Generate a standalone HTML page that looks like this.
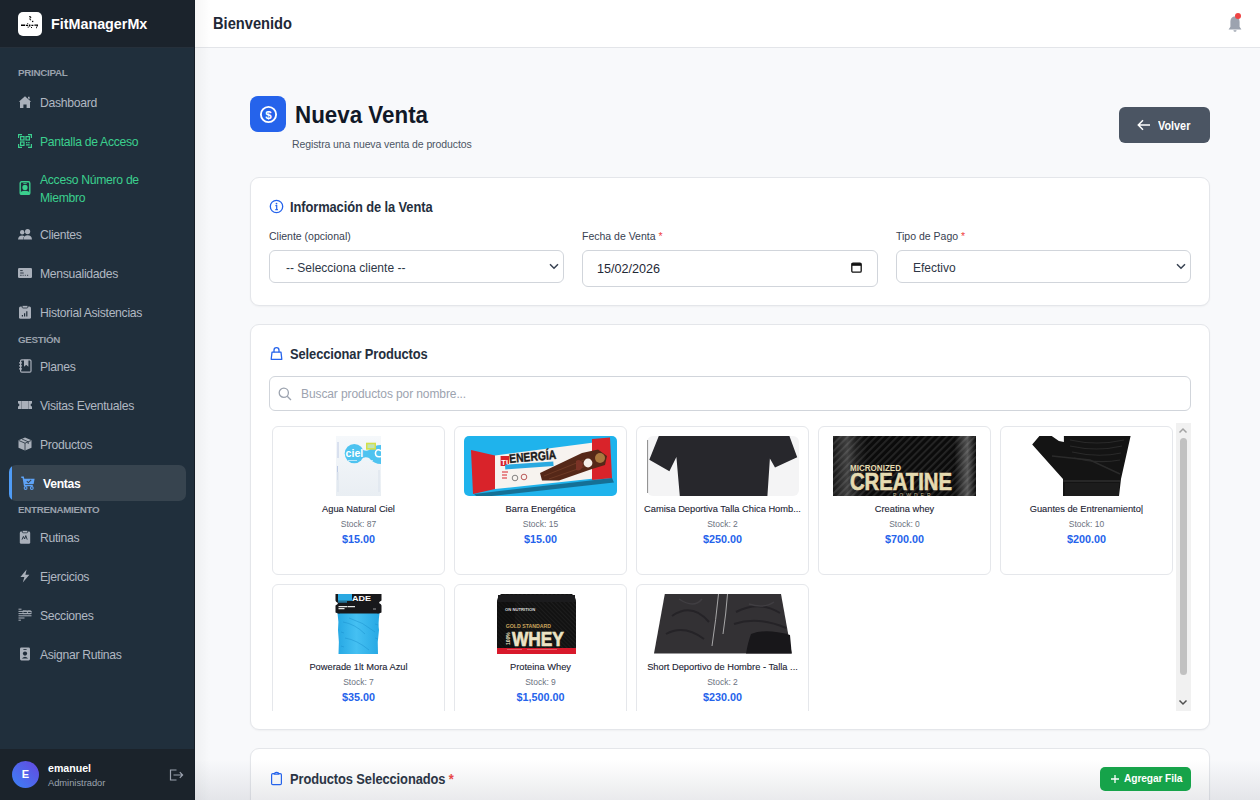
<!DOCTYPE html>
<html><head><meta charset="utf-8">
<style>
*{box-sizing:border-box;margin:0;padding:0}
html,body{width:1260px;height:800px;overflow:hidden;background:#f8f9fb;font-family:"Liberation Sans",sans-serif;position:relative}
.a{position:absolute;white-space:nowrap}
/* sidebar */
#sb{position:absolute;left:0;top:0;width:195px;height:800px;background:#202f3c;border-right:1px solid #161e27}
#brand{position:absolute;left:0;top:0;width:194px;height:48px;background:#1b232c;border-bottom:1px solid #26303b}
#logo{position:absolute;left:18px;top:12px;width:24px;height:24px;background:#fff;border-radius:5px}
.sec{position:absolute;left:18px;font-size:9.8px;font-weight:700;color:#9aa2ad;letter-spacing:-0.3px;line-height:12px}
.it{position:absolute;left:40px;font-size:12.2px;color:#b1b8c2;line-height:18px;letter-spacing:-0.3px}
.it.g{color:#3bcf8e}
.ic{position:absolute;left:18px;width:14px;height:14px}
#act{position:absolute;left:9px;top:465px;width:177px;height:36px;background:#37444f;border-radius:7px;overflow:hidden}
#act:before{content:"";position:absolute;left:0;top:0;width:3px;height:36px;background:#4f9cf6}
#foot{position:absolute;left:0;top:749px;width:194px;height:51px;background:#1b232b}
/* main */
#hdr{position:absolute;left:195px;top:0;width:1065px;height:48px;background:#fff;border-bottom:1px solid #e3e5e9}
#shadowL{position:absolute;left:195px;top:0;width:16px;height:800px;background:linear-gradient(90deg,rgba(0,0,0,0.035),rgba(0,0,0,0))}
.card{position:absolute;left:250px;width:960px;background:#fff;border:1px solid #e4e6ea;border-radius:9px;box-shadow:0 1px 2px rgba(0,0,0,0.04)}
.ttl{position:absolute;font-size:14px;font-weight:700;color:#252f3e;line-height:16px;letter-spacing:-0.1px;transform:scaleX(0.92);transform-origin:0 0}
.lbl{position:absolute;font-size:10.5px;color:#374151;line-height:13px}
.req{color:#ef4444}
.inp{position:absolute;background:#fff;border:1px solid #d1d5db;border-radius:6px}
.inp span{position:absolute;font-size:12px;color:#1f2937;line-height:14px}
.pc{position:absolute;width:173px;height:149px;background:#fff;border:1px solid #e5e7eb;border-radius:6px}
.pc .im{position:absolute;top:9px;height:60px}
.pc .nm{position:absolute;left:4px;width:163px;top:77px;text-align:center;font-size:9.3px;color:#1a2232;-webkit-text-stroke:0.1px #1a2232;line-height:11px;overflow:hidden;text-overflow:ellipsis;white-space:nowrap}
.pc .st{position:absolute;left:0;width:171px;top:92px;text-align:center;font-size:8.5px;color:#6b7280;line-height:10px}
.pc .pr{position:absolute;left:0;width:171px;top:105.5px;text-align:center;font-size:10.8px;font-weight:700;color:#2563eb;line-height:13px}
</style></head><body>

<div id="sb">
  <div id="brand">
    <div id="logo"><svg style="position:absolute;left:0;top:0" width="24" height="24" viewBox="0 0 24 24" fill="#000"><path d="M11 4.2h1.6l.9 1-1.5 1.6 1.3 1.2-.6.5-1.6-1.5 1.3-1.3-.5-.5H11z"/><rect x="14" y="8.8" width="1.3" height="1.3"/><rect x="9.2" y="11.2" width="1" height="1"/><path d="M3 12.6h4.2v1.5H3zM8 12.8h2.2v1.1H8zM11 12.5h1.4v2H11zM13.4 12.8h2v1.1h-2zM16.4 12.4h3.6v1.3l-1 1.2-.6-.4.5-.8h-2.5z"/><rect x="9.6" y="14.6" width="1.2" height="1"/><rect x="13" y="15" width="1" height="1"/><rect x="18" y="15.2" width="1" height="1"/></svg></div>
    <div class="a" style="left:51px;top:14.5px;font-size:15px;transform:scaleX(0.955);transform-origin:0 0;font-weight:700;color:#fff;line-height:17px">FitManagerMx</div>
  </div>
  <div class="sec" style="top:67px">PRINCIPAL</div>
  <div class="it" style="top:94px">Dashboard</div>
  <div class="it g" style="top:133px">Pantalla de Acceso</div>
  <div class="it g" style="top:171px">Acceso Número de<br>Miembro</div>
  <div class="it" style="top:226px">Clientes</div>
  <div class="it" style="top:265px">Mensualidades</div>
  <div class="it" style="top:304px">Historial Asistencias</div>
  <div class="sec" style="top:334px">GESTIÓN</div>
  <div class="it" style="top:358px">Planes</div>
  <div class="it" style="top:397px">Visitas Eventuales</div>
  <div class="it" style="top:436px">Productos</div>
  <div id="act"></div>
  <div class="it" style="top:475px;left:43px;font-weight:700;color:#fff">Ventas</div>
  <div class="sec" style="top:504px">ENTRENAMIENTO</div>
  <div class="it" style="top:529px">Rutinas</div>
  <div class="it" style="top:568px">Ejercicios</div>
  <div class="it" style="top:607px">Secciones</div>
  <div class="it" style="top:646px">Asignar Rutinas</div>
  <svg class="ic" style="top:95px" viewBox="0 0 14 14"><path fill="#a9b0ba" d="M7 1.2 L13.2 6.8 L12 6.8 V13 H8.6 V9.4 H5.4 V13 H2 V6.8 H0.8 Z M10 1.8 H11.6 V4.6 L10 3.2Z"/></svg>
  <svg class="ic" style="top:134px" viewBox="0 0 14 14" fill="none" stroke="#3bcf8e" stroke-width="1.2"><path d="M0.6 4V0.6H4M10 0.6h3.4V4M13.4 10v3.4H10M4 13.4H0.6V10"/><rect x="2.6" y="2.6" width="3.4" height="3.4"/><rect x="8" y="2.6" width="3.4" height="3.4"/><rect x="2.6" y="8" width="3.4" height="3.4"/><path d="M8 8.6h1.4M10.2 8.6h1.4M8 10.8h3.6"/></svg>
  <svg class="ic" style="top:181px;left:18px" viewBox="0 0 14 14"><rect x="2.2" y="0.8" width="9.6" height="12.6" rx="1.4" fill="none" stroke="#3bcf8e" stroke-width="1.4"/><circle cx="7" cy="6.4" r="2.6" fill="#3bcf8e"/><path d="M2.5 13.2 V11 Q7 8.6 11.5 11 V13.2Z" fill="#3bcf8e"/><rect x="5.3" y="2.2" width="3.4" height="0.8" fill="#3bcf8e"/></svg>
  <svg class="ic" style="top:227px" viewBox="0 0 14 14" fill="#a9b0ba"><circle cx="4.2" cy="5.2" r="2.2"/><circle cx="9.6" cy="4.6" r="2.6"/><path d="M0 12.4 Q0.4 8.6 4.2 8.6 Q5.6 8.6 6.4 9.2 Q5 10.6 5 12.4Z"/><path d="M5.4 12.4 Q5.8 8.2 9.6 8.2 Q13.6 8.2 14 12.4Z"/></svg>
  <svg class="ic" style="top:266px" viewBox="0 0 14 14"><rect x="0" y="2" width="14" height="10" rx="1.3" fill="#a9b0ba"/><path d="M2.2 4.6h2.5M2.2 7h3.5M2.2 9.3h1.4M4.6 9.3h1M6.8 9.3h1M9 9.3h1.2" stroke="#212e3b" stroke-width="0.9"/></svg>
  <svg class="ic" style="top:305px" viewBox="0 0 14 14"><rect x="1" y="1.6" width="12" height="12.2" rx="1.6" fill="#a9b0ba"/><rect x="4.2" y="0.4" width="5.6" height="2.6" rx="0.8" fill="#a9b0ba" stroke="#212e3b" stroke-width="0.8"/><path d="M4.4 11.6V10M6.6 11.6V8.2M8.8 11.6V6.2" stroke="#212e3b" stroke-width="1.2"/></svg>
  <svg class="ic" style="top:359px" viewBox="0 0 14 14" fill="none" stroke="#a9b0ba" stroke-width="1.2"><rect x="2.6" y="0.8" width="10.4" height="12.4" rx="1.2"/><path d="M6.6 0.8v5.6l1.6-1.3 1.6 1.3V0.8" fill="#a9b0ba"/><path d="M1 3.8h3M1 6.8h3M1 9.8h3"/></svg>
  <svg class="ic" style="top:398px" viewBox="0 0 14 14"><path fill="#a9b0ba" d="M0 3 H14 V5.6 A1.4 1.4 0 0 0 14 8.4 V11 H0 V8.4 A1.4 1.4 0 0 0 0 5.6Z"/><path d="M3.5 3.5v7M10.5 3.5v7" stroke="#212e3b" stroke-width="0.6" stroke-dasharray="1 1"/></svg>
  <svg class="ic" style="top:437px" viewBox="0 0 14 14"><path fill="#a9b0ba" d="M7 0.5 L13.5 3.3 V10.7 L7 13.5 L0.5 10.7 V3.3Z"/><path d="M0.8 3.5 L7 6.2 L13.2 3.5 M7 6.2 V13.3 M4 2 L10.2 4.8 V7" fill="none" stroke="#212e3b" stroke-width="0.8"/></svg>
  <svg class="ic" style="top:476px;left:21px" viewBox="0 0 14 14"><path fill="none" stroke="#5ea3f7" stroke-width="1.5" d="M0.3 1.2 H2.2 L3.6 9.4 H11.8"/><path fill="#5ea3f7" d="M2.6 2.8 H13.6 L12.6 8 H3.5Z"/><path fill="none" stroke="#374350" stroke-width="1.1" d="M5.8 5.2 L7.4 6.6 L10.2 3.9"/><circle cx="4.6" cy="12" r="1.4" fill="none" stroke="#5ea3f7" stroke-width="1.1"/><circle cx="10.8" cy="12" r="1.4" fill="none" stroke="#5ea3f7" stroke-width="1.1"/></svg>
  <svg class="ic" style="top:530px" viewBox="0 0 14 14"><rect x="1.8" y="1.6" width="10.4" height="12.2" rx="1.4" fill="#a9b0ba"/><rect x="4.4" y="0.4" width="5.2" height="2.4" rx="0.7" fill="#a9b0ba" stroke="#212e3b" stroke-width="0.7"/><path d="M4 9.6 L5.4 6.4 L6.6 9 L7.8 5.6 L9.2 9.6" fill="none" stroke="#212e3b" stroke-width="0.9"/></svg>
  <svg class="ic" style="top:569px" viewBox="0 0 14 14"><path fill="#a9b0ba" d="M8.6 0.4 L2.4 8 H6.4 L4.8 13.6 L11.4 5.8 H7.4Z"/></svg>
  <svg class="ic" style="top:608px" viewBox="0 0 14 14" fill="none" stroke="#a9b0ba" stroke-width="1"><path d="M0.5 1.2h3M0.5 3.4h13M0.5 5.6h13M0.5 7.8h13M0.5 10h6M0.5 12.2h2.4"/><path d="M5 2.6h3.4q1 0 1 1.6t-1 1.6H5z M9.6 2.6h2.6q1 0 1 1.6t-1 1.6H9.6z" stroke-width="0.7"/></svg>
  <svg class="ic" style="top:647px" viewBox="0 0 14 14"><rect x="2" y="0.5" width="10" height="13" rx="1.4" fill="#a9b0ba"/><circle cx="7" cy="6.6" r="2.1" fill="#212e3b"/><path d="M3.9 11.6 q3.1-3.8 6.2 0z" fill="#212e3b"/><rect x="5.4" y="2" width="3.2" height="0.8" fill="#212e3b"/></svg>
  <div id="foot">
    <div style="position:absolute;left:12px;top:12px;width:27px;height:27px;border-radius:50%;background:linear-gradient(45deg,#3b82f6,#6548e0)"></div>
    <div class="a" style="left:12px;top:18px;width:27px;text-align:center;font-size:11px;font-weight:700;color:#fff;line-height:14px">E</div>
    <div class="a" style="left:48px;top:13px;font-size:10.6px;font-weight:700;color:#fff;line-height:13px">emanuel</div>
    <div class="a" style="left:48px;top:28px;font-size:9.3px;color:#9ca3af;line-height:12px">Administrador</div>
    <svg style="position:absolute;left:169px;top:20px;width:15px;height:12px" viewBox="0 0 15 12" fill="none" stroke="#9ca3af" stroke-width="1.2"><path d="M7.5 1H1.5v10h6"/><path d="M4.5 6h9M10.8 3.2 13.6 6l-2.8 2.8"/></svg>
  </div>
</div>

<div id="hdr">
  <div class="a" style="left:18px;top:15px;font-size:15.6px;transform:scaleX(0.94);transform-origin:0 0;font-weight:700;color:#1f2937;line-height:17px">Bienvenido</div>
</div>
<div id="shadowL"></div>

<!-- page heading -->
<div style="position:absolute;left:250px;top:96px;width:36px;height:36px;background:#2563eb;border-radius:8px"></div>
<div class="a" style="left:295px;top:102px;font-size:23.5px;transform:scaleX(0.952);transform-origin:0 0;font-weight:700;color:#111827;line-height:26px">Nueva Venta</div>
<div class="a" style="left:292px;top:138px;font-size:10.5px;letter-spacing:-0.1px;color:#4b5563;line-height:13px">Registra una nueva venta de productos</div>
<div style="position:absolute;left:1119px;top:107px;width:91px;height:36px;background:#4b5563;border-radius:6px"></div>
<div class="a" style="left:1158px;top:118.5px;font-size:12.2px;transform:scaleX(0.89);transform-origin:0 0;font-weight:700;color:#fff;line-height:14px">Volver</div>

<!-- card 1 -->
<div class="card" style="top:177px;height:129px"></div>
<div class="ttl" style="left:290px;top:199px">Información de la Venta</div>
<div class="lbl" style="left:269px;top:230px">Cliente (opcional)</div>
<div class="lbl" style="left:582px;top:230px">Fecha de Venta <span class="req">*</span></div>
<div class="lbl" style="left:896px;top:230px">Tipo de Pago <span class="req">*</span></div>
<div class="inp" style="left:269px;top:250px;width:295px;height:33px"><span style="left:16px;top:10px;color:#2d3646">-- Selecciona cliente --</span></div>
<div class="inp" style="left:582px;top:250px;width:296px;height:37px"><span style="left:14px;top:11px;font-size:12.6px">15/02/2026</span></div>
<div class="inp" style="left:896px;top:250px;width:295px;height:33px"><span style="left:16px;top:10px;color:#2d3646">Efectivo</span></div>

<!-- card 2 -->
<div class="card" style="top:324px;height:406px"></div>
<div class="ttl" style="left:290px;top:346px">Seleccionar Productos</div>
<div class="inp" style="left:269px;top:376px;width:922px;height:35px"><span style="left:31px;top:10px;color:#9ca3af;letter-spacing:-0.1px">Buscar productos por nombre...</span></div>

<!-- card 3 -->
<div class="card" style="top:748px;height:80px"></div>
<div class="ttl" style="left:290px;top:771px">Productos Seleccionados <span class="req">*</span></div>
<!-- bottom fade -->
<div style="position:absolute;left:195px;top:760px;width:1065px;height:40px;background:linear-gradient(180deg,rgba(120,125,140,0),rgba(120,125,140,0.16))"></div>
<div style="position:absolute;left:1100px;top:767px;width:91px;height:24px;background:#16a34a;border-radius:5px"></div>
<div class="a" style="left:1124px;top:772px;font-size:10.2px;letter-spacing:-0.1px;font-weight:700;color:#fff;line-height:13px">Agregar Fila</div>
<!-- plus -->
<svg style="position:absolute;left:1110px;top:774px;width:10px;height:10px" viewBox="0 0 10 10" stroke="#fff" stroke-width="1.3"><path d="M5 1v8M1 5h8"/></svg>


<!-- bell -->
<svg style="position:absolute;left:1226px;top:12px;width:18px;height:22px" viewBox="0 0 18 22"><path fill="#9ca3af" d="M9 4.5 C5.6 4.5 4.4 7 4.4 10 V14.8 L2.6 17.6 H15.4 L13.6 14.8 V10 C13.6 7 12.4 4.5 9 4.5Z"/><path fill="#9ca3af" d="M7.4 18.3 H10.6 Q10.4 19.8 9 19.8 Q7.6 19.8 7.4 18.3Z"/><circle cx="12" cy="4" r="3" fill="#ef4444"/></svg>

<!-- page icon -->
<svg style="position:absolute;left:259px;top:105px;width:19px;height:19px" viewBox="0 0 19 19"><circle cx="9.5" cy="9.5" r="7.6" fill="none" stroke="#fff" stroke-width="1.9"/><text x="9.5" y="13.6" text-anchor="middle" font-family="Liberation Sans" font-weight="700" font-size="11.5" fill="#fff">$</text></svg>
<!-- volver arrow -->
<svg style="position:absolute;left:1137px;top:119px;width:14px;height:12px" viewBox="0 0 14 12" fill="none" stroke="#fff" stroke-width="1.5"><path d="M13 6H1.5M6 1.3 1.3 6 6 10.7"/></svg>

<!-- info icon -->
<svg style="position:absolute;left:269px;top:199px;width:15px;height:15px" viewBox="0 0 15 15"><circle cx="7.5" cy="7.5" r="6.2" fill="none" stroke="#2563eb" stroke-width="1.3"/><circle cx="7.5" cy="4.6" r="0.9" fill="#2563eb"/><path d="M6.4 6.6h1.3v4M6.3 10.6h2.6" stroke="#2563eb" stroke-width="1.2" fill="none"/></svg>
<!-- chevrons -->
<svg style="position:absolute;left:549px;top:263px;width:10px;height:7px" viewBox="0 0 10 7" fill="none" stroke="#374151" stroke-width="1.5"><path d="M1 1.2 5 5.2 9 1.2"/></svg>
<svg style="position:absolute;left:1176px;top:263px;width:10px;height:7px" viewBox="0 0 10 7" fill="none" stroke="#374151" stroke-width="1.5"><path d="M1 1.2 5 5.2 9 1.2"/></svg>
<!-- calendar icon -->
<svg style="position:absolute;left:851px;top:262px;width:11px;height:11px" viewBox="0 0 11 11"><rect x="0.8" y="1.2" width="9.4" height="9" rx="1.2" fill="none" stroke="#111" stroke-width="1.3"/><rect x="0.8" y="1.2" width="9.4" height="2.6" fill="#111"/></svg>

<!-- bag icon -->
<svg style="position:absolute;left:269px;top:346px;width:14px;height:15px" viewBox="0 0 14 15" fill="none" stroke="#2563eb" stroke-width="1.3"><path d="M3 6.2 H12 L12.8 13.3 H2.2Z" stroke-linejoin="round"/><path d="M5 6.2V4.2a2.5 2.5 0 0 1 5 0V6.2"/></svg>
<!-- search icon -->
<svg style="position:absolute;left:278px;top:387px;width:14px;height:14px" viewBox="0 0 14 14" fill="none" stroke="#9ca3af" stroke-width="1.3"><circle cx="5.8" cy="5.8" r="4.6"/><path d="M9.2 9.2 13 13"/></svg>

<!-- product grid -->
<div id="grid" style="position:absolute;left:269px;top:423px;width:922px;height:288px;overflow:hidden">
<div class="pc" style="left:3px;top:3px"><svg style="position:absolute;left:63px;top:9px;width:45px;height:60px" viewBox="0 0 45 60">
<defs><linearGradient id="cg" x1="0" x2="0" y1="0" y2="1"><stop offset="0" stop-color="#f5f8fb"/><stop offset="1" stop-color="#e9eef3"/></linearGradient></defs>
<rect x="0" y="0" width="45" height="60" fill="url(#cg)"/>
<path d="M2 6v16M1.5 30v14" stroke="#b3c0e0" stroke-width="0.8"/>
<path d="M2 36v20M43 34v22" stroke="#dfe6ee" stroke-width="1.5"/>
<circle cx="18.3" cy="17.6" r="9.6" fill="#4ec3f0"/>
<path d="M25 12.5 Q29 16 33 14 Q38 9 45 9 V28 Q38 28 33 22 Q29 20 25 23Z" fill="#4ec3f0"/>
<path d="M45 15 Q43 13 41 14 Q38.5 16 40 19.5 Q41.5 21.5 45 20.5" fill="none" stroke="#fff" stroke-width="1.5"/>
<rect x="30" y="6.7" width="10" height="7" fill="#d3e04a"/>
<rect x="31.5" y="8.3" width="7" height="3.8" fill="#bfe3b8"/>
<text x="9.6" y="20.8" font-family="Liberation Sans" font-size="10.5" font-weight="700" fill="#fff" textLength="17.6" lengthAdjust="spacingAndGlyphs">ciel</text>
<path d="M12 24.5h9M29 24.5h8" stroke="#e8f6fd" stroke-width="0.7"/>
</svg><div class="nm">Agua Natural Ciel</div><div class="st">Stock: 87</div><div class="pr">$15.00</div></div>
<div class="pc" style="left:185px;top:3px"><svg style="position:absolute;left:9px;top:9px;width:153px;height:60px" viewBox="0 0 153 60">
<rect x="0" y="0" width="153" height="60" rx="5" fill="#1fb3ec"/>
<path d="M10 58 L148 42 L150 46.5 L14 61.5z" fill="#13597a" opacity="0.75"/>
<path d="M31 19.6 L128 6.7 L128 42.8 L31 53Z" fill="#f7f3ef"/>
<path d="M7 14 L31 19.6 L31 53 L9 58Z" fill="#d9232a"/>
<path d="M128 3 L146 1.5 L148 42 L128 44Z" fill="#d9232a"/>
<rect x="36.6" y="20" width="8.5" height="10" fill="#d9232a"/><text x="37.3" y="28.6" font-family="Liberation Sans" font-size="7.5" font-weight="700" fill="#fff">TU</text>
<text x="45.5" y="27" font-family="Liberation Sans" font-size="12.5" font-weight="700" fill="#1a1a1a" stroke="#1a1a1a" stroke-width="0.4" textLength="47" lengthAdjust="spacingAndGlyphs" transform="rotate(-5 45 26)">ENERGÍA</text>
<path d="M41 28.8 L89.3 25.5 L89.6 30 L41.3 33.4Z" fill="#2aa9e0"/>
<path d="M76 37 L118 17 L134 13.5 L143 20 L141 29 L128 33 L95 44.5 L78 44.5Z" fill="#552818"/>
<path d="M80 40 L120 24 M85 43 L125 29" stroke="#6e3a25" stroke-width="1" fill="none"/>
<circle cx="136" cy="22" r="5" fill="#a9783f"/>
<circle cx="124" cy="27" r="4.4" fill="#f4efe9"/>
<path d="M112 25 Q116 22 119 28 Q118 36 112 34Z" fill="#7b3326"/>
<circle cx="51" cy="42" r="2.8" fill="none" stroke="#666" stroke-width="0.8"/>
<circle cx="60" cy="41" r="2.8" fill="none" stroke="#a33" stroke-width="0.8"/>
<path d="M38 36h6M38 39h5M38 42h5" stroke="#d9232a" stroke-width="1"/>
</svg><div class="nm">Barra Energética</div><div class="st">Stock: 15</div><div class="pr">$15.00</div></div>
<div class="pc" style="left:367px;top:3px"><svg style="position:absolute;left:9.6px;top:9px;width:152px;height:60px" viewBox="0 0 152 60">
<rect x="0" y="0" width="152" height="60" rx="6" fill="#f4f4f5"/>
<path d="M0.6 4V57" stroke="#8a8a8a" stroke-width="1"/>
<path d="M11.8 0 L142.4 0 L150.2 21.3 L128 31.5 L122.9 22.6 L120.4 60 L32.8 60 L29.4 21 L22.4 35.3 L2.3 23.8Z" fill="#27272c"/>
</svg><div class="nm">Camisa Deportiva Talla Chica Homb...</div><div class="st">Stock: 2</div><div class="pr">$250.00</div></div>
<div class="pc" style="left:549px;top:3px"><svg style="position:absolute;left:14.4px;top:9px;width:143px;height:60px" viewBox="0 0 143 60">
<defs><pattern id="dp" width="5" height="5" patternUnits="userSpaceOnUse" patternTransform="rotate(-45)"><rect width="5" height="5" fill="#0b0b0b"/><rect width="5" height="1.8" fill="#262626"/></pattern>
<linearGradient id="hl" x1="0" x2="1"><stop offset="0" stop-color="#fff" stop-opacity="0.05"/><stop offset="0.1" stop-color="#fff" stop-opacity="0.22"/><stop offset="0.16" stop-color="#fff" stop-opacity="0.08"/><stop offset="0.24" stop-color="#fff" stop-opacity="0"/><stop offset="0.85" stop-color="#fff" stop-opacity="0"/><stop offset="0.94" stop-color="#fff" stop-opacity="0.3"/><stop offset="1" stop-color="#fff" stop-opacity="0"/></linearGradient></defs>
<rect width="143" height="60" fill="url(#dp)"/>
<rect width="143" height="60" fill="url(#hl)"/>
<text x="17" y="34.6" font-family="Liberation Sans" font-size="8.6" font-weight="700" fill="#e6dbb0" textLength="51" lengthAdjust="spacingAndGlyphs">MICRONIZED</text>
<text x="17" y="53.7" font-family="Liberation Sans" font-size="23" font-weight="700" fill="#e6dbb0" stroke="#e6dbb0" stroke-width="0.6" textLength="102" lengthAdjust="spacingAndGlyphs">CREATINE</text>
<text x="60" y="61" font-family="Liberation Sans" font-size="5" fill="#c8be98" letter-spacing="3">POWDER</text>
</svg><div class="nm">Creatina whey</div><div class="st">Stock: 0</div><div class="pr">$700.00</div></div>
<div class="pc" style="left:731px;top:3px"><svg style="position:absolute;left:31px;top:9px;width:99px;height:60px" viewBox="0 0 99 60">
<path d="M0.2 8.4 L7.4 0 L19.7 0 L26.9 5 L31.9 6 L31.9 0 L98.6 0 L89 43 L87 60 L31 60 L31 43Z" fill="#141414"/>
<path d="M38 4 Q65 10 92 4 M38 10 Q65 16 90 10 M40 16 Q66 22 89 17 M42 22 Q66 28 88 24" stroke="#2a2a2a" stroke-width="1.2" fill="none"/>
<path d="M20 20 L58 24 L88 38" stroke="#2b2b2b" stroke-width="1.4" fill="none"/>
<path d="M31 45 H88" stroke="#3a3a3a" stroke-width="1"/>
<rect x="33" y="47" width="54" height="13" fill="#1c1c1c"/>
</svg><div class="nm">Guantes de Entrenamiento|</div><div class="st">Stock: 10</div><div class="pr">$200.00</div></div>
<div class="pc" style="left:3px;top:161px"><svg style="position:absolute;left:62px;top:9px;width:47px;height:60px" viewBox="0 0 47 60">
<defs><linearGradient id="pg" x1="0" x2="1"><stop offset="0" stop-color="#26a8e4"/><stop offset="0.45" stop-color="#45c0f2"/><stop offset="1" stop-color="#26a8e4"/></linearGradient></defs>
<path d="M2.5 19 L44.5 19 Q43 30 44 36 Q42 48 43 60 L3.5 60 Q4.5 48 3 36 Q4 28 2.5 19Z" fill="url(#pg)"/>
<path d="M8 28 Q20 30 30 40 M14 24 Q28 28 40 38 M10 44 Q22 46 34 56 M6 38 l3 1 M40 30 l3 1 M40 44 l3 1 M6 52 l3 1" stroke="#1a90cc" stroke-width="0.8" fill="none" opacity="0.6"/>
<path d="M0.5 0 H46.5 V6.5 Q44 7.5 44 9 Q46.5 10 46.5 11.5 V18.5 Q44 20 42 19.5 H5 Q3 20 0.5 18.5 V11.5 Q3 10 3 9 Q0.5 7.5 0.5 6.5Z" fill="#18181b"/>
<path d="M3 0 H17 V6.8 H3Z" fill="#2aa9e2"/>
<path d="M3 7.2 H12 V8.6 H3Z" fill="#2aa9e2" opacity="0.8"/>
<text x="17" y="6.8" font-family="Liberation Sans" font-size="8" font-weight="700" fill="#fff" textLength="19" lengthAdjust="spacingAndGlyphs">ADE</text>
<path d="M3.5 12.6h9M3.5 14.6h6M13 12.6h7" stroke="#e6e6e6" stroke-width="1.1"/>
<path d="M38 15h3" stroke="#bbb" stroke-width="0.8"/>
</svg><div class="nm">Powerade 1lt Mora Azul</div><div class="st">Stock: 7</div><div class="pr">$35.00</div></div>
<div class="pc" style="left:185px;top:161px"><svg style="position:absolute;left:42px;top:9px;width:79px;height:60px" viewBox="0 0 79 60">
<defs><pattern id="wp" width="3" height="3" patternUnits="userSpaceOnUse" patternTransform="rotate(45)"><rect width="3" height="3" fill="#121212"/><rect width="3" height="1" fill="#1d1d1d"/></pattern></defs>
<path d="M4 0 H75 Q79 3 79 8 V60 H0 V8 Q0 3 4 0Z" fill="url(#wp)"/>
<path d="M1 1 H78 V8 H1Z" fill="#1b1b1d"/>
<path d="M0 8 H18 V60 H0Z" fill="#0c0c0c" opacity="0.5"/>
<rect x="0" y="54" width="79" height="6" fill="#d8192b"/>
<path d="M10 55.5h15M30 55.5h30" stroke="#f0a0a0" stroke-width="0.5"/>
<text x="8" y="17" font-family="Liberation Sans" font-size="4.2" font-weight="700" fill="#ddd">ON NUTRITION</text>
<text x="8.7" y="34" font-family="Liberation Sans" font-size="5.8" font-weight="700" fill="#c9a45c" textLength="45.3" lengthAdjust="spacingAndGlyphs">GOLD STANDARD</text>
<text x="14.9" y="51.6" font-family="Liberation Sans" font-size="21" font-weight="700" fill="#ece3c4" stroke="#ece3c4" stroke-width="0.7" textLength="52" lengthAdjust="spacingAndGlyphs">WHEY</text>
<text x="12.8" y="51" font-family="Liberation Sans" font-size="5" font-weight="700" fill="#ece3c4" transform="rotate(-90 12.8 51)">100%</text>
</svg><div class="nm">Proteina Whey</div><div class="st">Stock: 9</div><div class="pr">$1,500.00</div></div>
<div class="pc" style="left:367px;top:161px"><svg style="position:absolute;left:17px;top:9px;width:138px;height:60px" viewBox="0 0 138 60">
<path d="M10.8 0 L127 0 L137.7 59.5 L0 59.5Z" fill="#333134"/>
<path d="M97 40 Q112 34 136 41 L137.7 59.5 L92 59.5 Q94 48 97 40Z" fill="#18171a"/>
<path d="M64.5 0 Q62 25 58 52 M73.5 0 Q72 20 69 40" stroke="#c4c4c4" stroke-width="0.8" fill="none"/>
<path d="M18 22 Q38 8 55 28 M12 40 Q30 30 50 45 M82 18 Q105 6 126 19 M80 30 Q104 22 132 34" stroke="#252327" stroke-width="2" fill="none"/>
<path d="M25 5 Q40 15 48 5 M95 10 Q110 15 120 8" stroke="#403e42" stroke-width="1.5" fill="none"/>
</svg><div class="nm">Short Deportivo de Hombre - Talla ...</div><div class="st">Stock: 2</div><div class="pr">$230.00</div></div>

</div>
<!-- scrollbar -->
<div style="position:absolute;left:1176px;top:423px;width:15px;height:288px;background:#f1f1f1"></div>
<div style="position:absolute;left:1180px;top:438px;width:7px;height:237px;background:#c1c1c1;border-radius:4px"></div>
<svg style="position:absolute;left:1178px;top:427px;width:10px;height:7px" viewBox="0 0 10 7" fill="none" stroke="#a3a3a3" stroke-width="1.5"><path d="M1.5 5.5 5 2 8.5 5.5"/></svg>
<svg style="position:absolute;left:1178px;top:699px;width:10px;height:7px" viewBox="0 0 10 7" fill="none" stroke="#505050" stroke-width="1.5"><path d="M1.5 1.5 5 5 8.5 1.5"/></svg>

<!-- clipboard icon -->
<svg style="position:absolute;left:270px;top:771px;width:13px;height:15px" viewBox="0 0 13 15" fill="none" stroke="#2563eb" stroke-width="1.2"><path d="M4.2 2.6H2.8q-1.2 0-1.2 1.2v8.6q0 1.2 1.2 1.2h7.4q1.2 0 1.2-1.2V3.8q0-1.2-1.2-1.2H8.8"/><path d="M4.3 3.2q0-1.8 2.2-1.8t2.2 1.8z"/></svg>



</body></html>
